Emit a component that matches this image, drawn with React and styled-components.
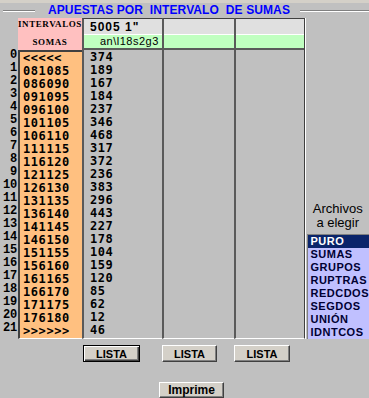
import styled, { createGlobalStyle } from 'styled-components';

const Global = createGlobalStyle`
  html, body {
    margin: 0;
    padding: 0;
    background: #c0c0c0;
  }
  body {
    width: 369px;
    height: 398px;
    overflow: hidden;
    font-family: "Liberation Sans", Arial, sans-serif;
  }
`;

const intervals = [
  '<<<<<', '081085', '086090', '091095', '096100', '101105', '106110', '111115',
  '116120', '121125', '126130', '131135', '136140', '141145', '146150', '151155',
  '156160', '161165', '166170', '171175', '176180', '>>>>>>',
];
const counts = [374, 189, 167, 184, 237, 346, 468, 317, 372, 236, 383, 296, 443, 227, 178, 104, 159, 120, 85, 62, 12, 46];
const files = ['PURO', 'SUMAS', 'GRUPOS', 'RUPTRAS', 'REDCDOS', 'SEGDOS', 'UNIÓN', 'IDNTCOS'];

function App() {
  return (
    <>
      <Global />
      <Window>
        <TitleBar>
          <Rule $w={32} $ml={3} />
          <Title>{'APUESTAS POR  INTERVALO  DE SUMAS'}</Title>
          <Rule $ml={10} />
        </TitleBar>

        <Main>
          <RowNums>
            {intervals.map((_, i) => (
              <RowNum key={i}>{i}</RowNum>
            ))}
          </RowNums>

          <KeyCol>
            <PinkHead>
              <HeadLabel>INTERVALOS</HeadLabel>
              <HeadLabel>SOMAS</HeadLabel>
            </PinkHead>
            <OrangeBody>
              {intervals.map((v, i) => (
                <Cell key={i}>{v}</Cell>
              ))}
            </OrangeBody>
          </KeyCol>

          <DataCol $w={80}>
            <HeadTop>5005 1"</HeadTop>
            <HeadGreen>an\l18s2g3</HeadGreen>
            <DataBody>
              {counts.map((v, i) => (
                <Cell key={i} $pl={6}>{v}</Cell>
              ))}
            </DataBody>
          </DataCol>
          <DataCol $w={72}>
            <HeadTop />
            <HeadGreen />
            <DataBody />
          </DataCol>
          <DataCol $w={72} $last>
            <HeadTop />
            <HeadGreen />
            <DataBody />
          </DataCol>

          <SidePanel>
            <SideLabel>
              <span>Archivos</span>
              <span>a elegir</span>
            </SideLabel>
            <ListBox>
              {files.map((f, i) => (
                <ListItem key={f} $selected={i === 0}>{f}</ListItem>
              ))}
            </ListBox>
          </SidePanel>
        </Main>

        <ButtonRow>
          <Button $default $w={57} style={{ gridColumn: 2, marginLeft: 1 }}>LISTA</Button>
          <Button $w={55} style={{ gridColumn: 3 }}>LISTA</Button>
          <Button $w={56} style={{ gridColumn: 4 }}>LISTA</Button>
        </ButtonRow>
        <PrintRow>
          <Button $w={65} $big>Imprime</Button>
        </PrintRow>
      </Window>
    </>
  );
}

const Window = styled.div`
  width: 369px;
  height: 398px;
  box-sizing: border-box;
  border-top: 3px solid #d4d0c8;
  background: #c0c0c0;
  display: flex;
  flex-direction: column;
  overflow: hidden;
`;

const TitleBar = styled.div`
  height: 17px;
  display: flex;
  align-items: center;
`;

const Rule = styled.div`
  flex: ${(p) => (p.$w ? 'none' : 1)};
  width: ${(p) => (p.$w ? `${p.$w}px` : 'auto')};
  margin-left: ${(p) => p.$ml}px;
  border-top: 1px solid #808080;
  border-bottom: 1px solid #ffffff;
`;

const Title = styled.div`
  margin-left: 13px;
  white-space: pre;
  color: #0000ff;
  font-weight: bold;
  font-size: 12px;
  line-height: 15px;
  letter-spacing: 0.1px;
`;

const Main = styled.div`
  display: flex;
  height: 322px;
`;

const RowNums = styled.div`
  width: 18px;
  padding-top: 31px;
  box-sizing: border-box;
`;

const RowNum = styled.div`
  height: 13px;
  line-height: 13px;
  text-align: right;
  padding-right: 1px;
  font-family: "Liberation Mono", "Courier New", monospace;
  font-weight: bold;
  font-size: 12px;
  letter-spacing: -0.2px;
  color: #000;
`;

const KeyCol = styled.div`
  width: 64px;
  display: flex;
  flex-direction: column;
`;

const PinkHead = styled.div`
  height: 32px;
  box-sizing: border-box;
  padding: 1px 0 3px;
  background: #ffc0c0;
  display: flex;
  flex-direction: column;
  justify-content: space-between;
  align-items: center;
`;

const HeadLabel = styled.div`
  font-family: "Liberation Serif", "Times New Roman", serif;
  font-weight: bold;
  font-size: 9px;
  line-height: 10px;
  letter-spacing: 0.6px;
  color: #000;
`;

const OrangeBody = styled.div`
  height: 289px;
  box-sizing: border-box;
  background: #ffc080;
  border-top: 2px solid #404040;
  border-left: 2px solid #404040;
  border-bottom: 1px solid #ffffff;
`;

const Cell = styled.div`
  height: 13px;
  line-height: 13px;
  padding-left: ${(p) => p.$pl ?? 3}px;
  font-family: "DejaVu Sans Mono", monospace;
  font-weight: bold;
  font-size: 12px;
  letter-spacing: 0.6px;
  color: #000;
  white-space: pre;
`;

const DataCol = styled.div`
  width: ${(p) => p.$w}px;
  height: 321px;
  box-sizing: border-box;
  display: flex;
  flex-direction: column;
  border-top: 1px solid #404040;
  border-left: 2px solid #5a5a5a;
  border-right: ${(p) => (p.$last ? '1px solid #404040' : 'none')};
  border-bottom: 1px solid #ffffff;
`;

const HeadTop = styled.div`
  height: 16px;
  flex: none;
  box-sizing: border-box;
  padding-left: 6px;
  background: #e0e0e0;
  border-bottom: 1px solid #ffffff;
  font-weight: bold;
  font-size: 12px;
  line-height: 17px;
  letter-spacing: 1px;
  color: #000;
`;

const HeadGreen = styled.div`
  height: 15px;
  flex: none;
  box-sizing: border-box;
  padding-right: 3px;
  background: #c0ffc0;
  border-bottom: 2px solid #5a5a5a;
  text-align: right;
  font-size: 11px;
  line-height: 13px;
  letter-spacing: 0.5px;
  color: #000;
`;

const DataBody = styled.div`
  flex: 1;
  padding-top: 1px;
`;

const SidePanel = styled.div`
  flex: 1;
  border-left: 1px solid #ffffff;
  display: flex;
  flex-direction: column;
  justify-content: flex-end;
`;

const SideLabel = styled.div`
  display: flex;
  flex-direction: column;
  align-items: center;
  font-size: 13px;
  line-height: 14px;
  color: #000;
  margin-bottom: 4px;
`;

const ListBox = styled.div`
  margin-left: 1px;
  border-left: 1px solid #808080;
  border-top: 1px solid #808080;
  background: #c0c0ff;
`;

const ListItem = styled.div`
  height: 13px;
  line-height: 13px;
  padding-left: 2px;
  font-weight: bold;
  font-size: 11px;
  letter-spacing: 0.5px;
  color: ${(p) => (p.$selected ? '#ffffff' : '#000033')};
  background: ${(p) => (p.$selected ? '#0a246a' : 'transparent')};
`;

const ButtonRow = styled.div`
  display: grid;
  grid-template-columns: 82px 80px 72px 72px;
  margin-top: 6px;
  align-items: start;
`;

const PrintRow = styled.div`
  margin-top: 18px;
  padding-left: 159px;
`;

const Button = styled.button`
  width: ${(p) => p.$w}px;
  height: ${(p) => (p.$big ? 16 : 17)}px;
  padding: 0;
  background: #d4d0c8;
  color: #000;
  font-family: "Liberation Sans", Arial, sans-serif;
  font-weight: bold;
  font-size: ${(p) => (p.$big ? 12 : 11)}px;
  line-height: 14px;
  border: 1px solid;
  border-color: ${(p) => (p.$default ? '#000 #000 #000 #000' : '#ffffff #404040 #404040 #ffffff')};
  box-shadow: ${(p) =>
    p.$default
      ? 'inset 1px 1px #ffffff, inset -1px -1px #404040, inset -2px -2px #808080'
      : 'inset -1px -1px #808080'};
`;

export default App;
